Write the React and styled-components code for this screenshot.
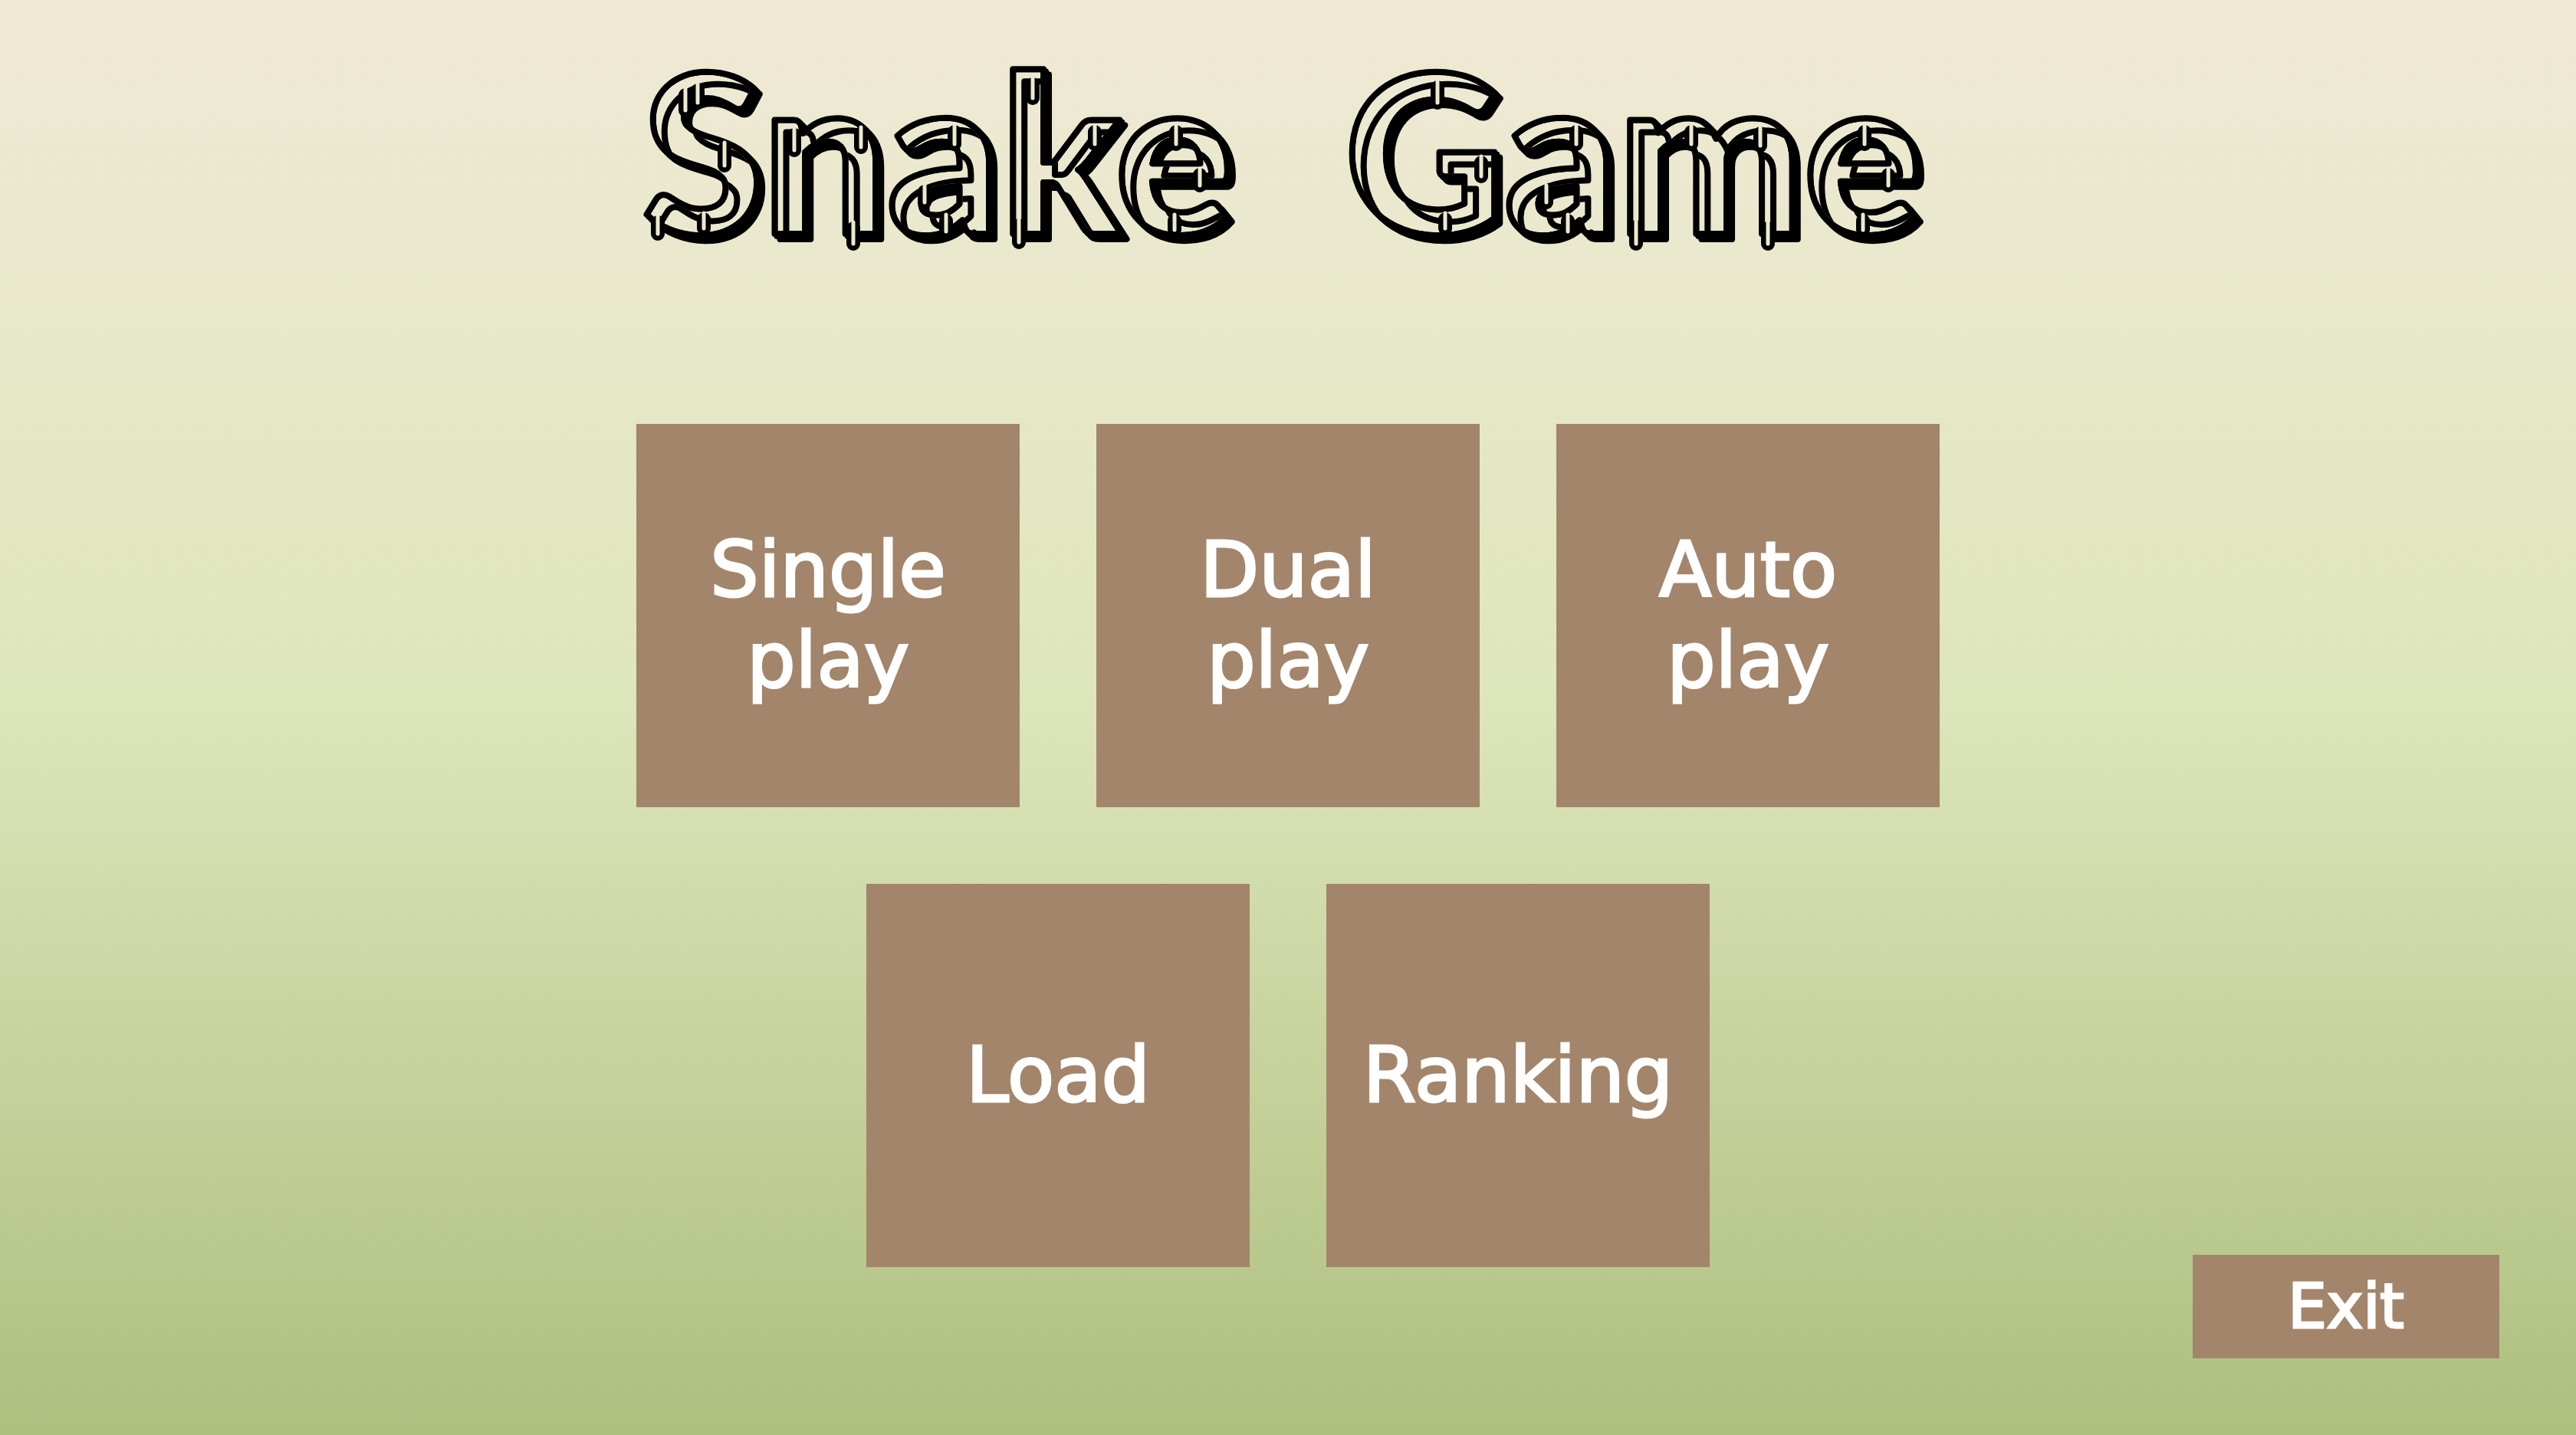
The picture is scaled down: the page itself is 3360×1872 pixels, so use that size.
import React from "react";
import styled, { createGlobalStyle } from "styled-components";

const GlobalStyle = createGlobalStyle`
  * { box-sizing: border-box; }
  body { margin: 0; }
`;

const Page = styled.main`
  display: grid;
  min-height: 100vh;
  background: linear-gradient(#f0e9d6 0%, #dee6bc 48%, #aebf7e 100%);
  font-family: "DejaVu Sans", sans-serif;
`;

const Menu = styled.div`
  grid-area: 1 / 1;
  display: flex;
  flex-direction: column;
  align-items: center;
  padding: 60px 100px;
`;

const Title = styled.h1`
  width: 100%;
  max-width: 1720px;
  margin: 0 0 193px;
`;

const Logo = styled.svg`
  display: block;
  width: 100%;
  height: auto;
  overflow: visible;
`;

const LogoText = styled.text`
  font: 900 288px Lato, sans-serif;
  fill: #fff;
  stroke: #000;
  stroke-width: 8px;
  stroke-linejoin: round;
`;

const Drip = styled.path`
  fill: none;
  stroke-linecap: round;
  stroke: ${(p) => (p.$core ? "#ebe9d0" : "#000")};
  stroke-width: ${(p) => (p.$core ? 5 : 18)}px;
`;

const Row = styled.div`
  display: flex;
  flex-wrap: wrap;
  justify-content: center;
  gap: 100px;

  & + & { margin-top: 100px; }
`;

const Button = styled.button`
  border: 0;
  border-radius: 0;
  background: #a3856b;
  color: #fff;
  font-family: inherit;
  -webkit-text-stroke: 3px #fff;
  cursor: pointer;
`;

const Tile = styled(Button)`
  width: 500px;
  height: 500px;
  padding: 40px;
  font-size: 100px;
  line-height: 118px;
`;

const ExitButton = styled(Button)`
  grid-area: 1 / 1;
  place-self: end;
  width: 400px;
  height: 135px;
  margin: 100px;
  padding: 0;
  font-size: 80px;
  line-height: 96px;
`;

const rows = [
  ["Single play", "Dual play", "Auto play"],
  ["Load", "Ranking"],
];

// x, top and bottom of every drop of slime on the title
const drips = [
  [74, 64, 84], [90, 58, 74], [125, 134, 156], [98, 226, 238], [38, 230, 245],
  [216, 116, 136], [303, 114, 132], [293, 238, 258],
  [425, 112, 128], [386, 190, 204], [414, 228, 242],
  [527, 50, 68], [608, 112, 128], [509, 234, 256],
  [714, 112, 128], [745, 168, 182], [712, 228, 240],
  [1055, 54, 74], [1112, 152, 170], [1065, 226, 238],
  [1236, 112, 128], [1197, 190, 204], [1225, 228, 242],
  [1386, 112, 128], [1476, 114, 130], [1314, 236, 258], [1486, 238, 258],
  [1612, 112, 128], [1643, 168, 182], [1610, 228, 240],
];

function SlimeTitle() {
  return (
    <Logo viewBox="0 0 1720 300">
      <filter id="slime" x="-5%" y="-10%" width="110%" height="120%" colorInterpolationFilters="sRGB">
        <feColorMatrix in="SourceGraphic" values="0 0 0 0 0  0 0 0 0 0  0 0 0 0 0  1 0 0 0 0" result="body" />
        <feColorMatrix in="SourceGraphic" values="0 0 0 0 0  0 0 0 0 0  0 0 0 0 0  -1 0 0 1 0" result="outline" />
        <feOffset in="outline" dx="15" dy="16" result="moved" />
        <feComposite in="moved" in2="body" operator="in" result="inner" />
        <feOffset in="SourceAlpha" dx="3" dy="3" result="near" />
        <feOffset in="SourceAlpha" dx="7" dy="7" result="far" />
        <feMerge result="depth">
          <feMergeNode in="near" />
          <feMergeNode in="far" />
        </feMerge>
        <feComposite in="depth" in2="body" operator="out" result="shade" />
        <feMerge>
          <feMergeNode in="shade" />
          <feMergeNode in="inner" />
          <feMergeNode in="outline" />
        </feMerge>
      </filter>
      <LogoText x="18" y="245" filter="url(#slime)">
        Snake <tspan x="934">Game</tspan>
      </LogoText>
      {drips.map(([x, top, bottom]) => (
        <g key={`${x}-${top}`}>
          <Drip d={`M${x} ${top}V${bottom}`} />
          <Drip $core d={`M${x} ${top - 8}V${bottom}`} />
        </g>
      ))}
    </Logo>
  );
}

export default function App() {
  return (
    <Page>
      <GlobalStyle />
      <Menu>
        <Title>
          <SlimeTitle />
        </Title>
        {rows.map((row) => (
          <Row key={row[0]}>
            {row.map((label) => (
              <Tile key={label} type="button">{label}</Tile>
            ))}
          </Row>
        ))}
      </Menu>
      <ExitButton type="button">Exit</ExitButton>
    </Page>
  );
}
